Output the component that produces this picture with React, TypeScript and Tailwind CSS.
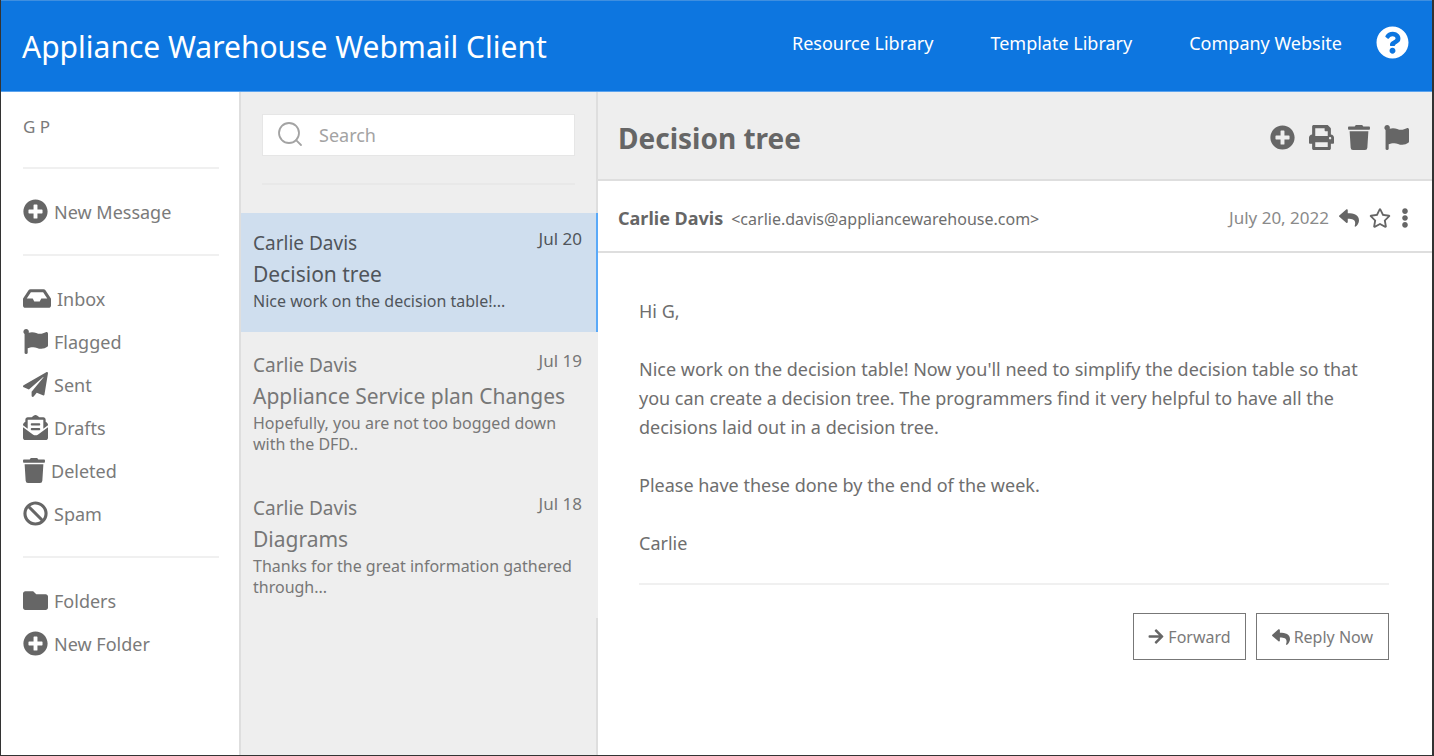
import type { ReactNode } from "react";
import type { IconType } from "react-icons";
import {
  FaArrowRight,
  FaBan,
  FaEllipsisV,
  FaEnvelopeOpenText,
  FaFlag,
  FaFolder,
  FaInbox,
  FaPaperPlane,
  FaPlusCircle,
  FaPrint,
  FaQuestionCircle,
  FaRegStar,
  FaReply,
  FaTrash,
} from "react-icons/fa";

type Message = {
  from: string;
  date: string;
  subject: string;
  preview: string;
  selected?: boolean;
};

const messages: Message[] = [
  {
    from: "Carlie Davis",
    date: "Jul 20",
    subject: "Decision tree",
    preview: "Nice work on the decision table!...",
    selected: true,
  },
  {
    from: "Carlie Davis",
    date: "Jul 19",
    subject: "Appliance Service plan Changes",
    preview: "Hopefully, you are not too bogged down with the DFD..",
  },
  {
    from: "Carlie Davis",
    date: "Jul 18",
    subject: "Diagrams",
    preview: "Thanks for the great information gathered through...",
  },
];

const topLinks = ["Resource Library", "Template Library", "Company Website"];

function NavItem({ icon: Icon, label, width = "w-[25px]" }: { icon: IconType; label: string; width?: string }) {
  return (
    <a href="#" className="flex h-[43px] items-center gap-1.5 text-[18px] leading-6">
      <Icon className={`h-[25px] shrink-0 text-[#666] ${width}`} />
      <span>{label}</span>
    </a>
  );
}

function NavDivider() {
  return (
    <div className="flex h-11 items-center">
      <hr className="w-full border-t-2 border-[#f0f0f0]" />
    </div>
  );
}

function Sidebar() {
  return (
    <nav aria-label="Mailboxes" className="w-[238px] shrink-0 bg-white pt-[15px] pr-5 pl-[22px] text-[#7a7a7a]">
      <p className="flex h-[39px] items-center text-[17px] leading-6">G P</p>
      <NavDivider />
      <NavItem icon={FaPlusCircle} label="New Message" />
      <NavDivider />
      <NavItem icon={FaInbox} label="Inbox" width="w-7" />
      <NavItem icon={FaFlag} label="Flagged" />
      <NavItem icon={FaPaperPlane} label="Sent" />
      <NavItem icon={FaEnvelopeOpenText} label="Drafts" />
      <NavItem icon={FaTrash} label="Deleted" width="w-[22px]" />
      <NavItem icon={FaBan} label="Spam" />
      <NavDivider />
      <NavItem icon={FaFolder} label="Folders" />
      <NavItem icon={FaPlusCircle} label="New Folder" />
    </nav>
  );
}

function SearchBox() {
  return (
    <div className="flex h-[42px] items-center border border-[#e6e6e6] bg-white pl-3.5">
      <svg viewBox="0 0 26 26" className="h-[26px] w-[26px] shrink-0" fill="none" stroke="#a3a3a3" strokeWidth="1.8">
        <circle cx="12" cy="11" r="10" />
        <path d="M19.1 18.2 L24 23" strokeLinecap="round" />
      </svg>
      <input
        type="search"
        aria-label="Search"
        placeholder="Search"
        className="w-full min-w-0 bg-transparent pl-4 text-[18px] leading-6 outline-none placeholder:text-[#a3a3a3]"
      />
    </div>
  );
}

function MessageRow({ message }: { message: Message }) {
  return (
    <li>
      <a
        href="#"
        className={
          message.selected
            ? "block border-r-2 border-[#5aa9f8] bg-[#cfdeee] pt-4 pr-3.5 pb-5 pl-3 text-[#50555b]"
            : "block border-r-2 border-[#eee] pt-[19px] pr-3.5 pb-5 pl-3 text-[#777]"
        }
      >
        <div className="flex items-start justify-between">
          <span className="pt-0.5 text-[19px] leading-6">{message.from}</span>
          <span className="text-[17px] leading-5">{message.date}</span>
        </div>
        <h2 className="pt-[3px] pb-px text-[21px] leading-8">{message.subject}</h2>
        <p className="text-[16px] leading-[21px]">{message.preview}</p>
      </a>
    </li>
  );
}

function MessageList() {
  return (
    <section aria-label="Messages" className="w-[359px] shrink-0 border-x-2 border-[#dedede] bg-[#eee]">
      <div className="px-[21px] pt-[22px] pb-7">
        <SearchBox />
        <hr className="mt-[27px] border-t-2 border-[#e8e8e8]" />
      </div>
      <ul className="-mr-0.5">
        {messages.map((message) => (
          <MessageRow key={message.date} message={message} />
        ))}
      </ul>
    </section>
  );
}

function IconButton({ label, children }: { label: string; children: ReactNode }) {
  return (
    <button type="button" aria-label={label} className="text-[#666]">
      {children}
    </button>
  );
}

function Reader() {
  return (
    <main className="min-w-0 flex-1 bg-white text-[#6e6e6e]">
      <header className="flex h-[89px] items-center justify-between border-b-2 border-[#dedede] bg-[#eee] pt-1 pr-[23px] pl-5">
        <h1 className="text-[28px] leading-9 font-bold text-[#666]">Decision tree</h1>
        <div className="flex items-center gap-3.5">
          <IconButton label="Add">
            <FaPlusCircle className="h-[25px] w-[25px]" />
          </IconButton>
          <IconButton label="Print">
            <FaPrint className="h-[25px] w-[25px]" />
          </IconButton>
          <IconButton label="Delete">
            <FaTrash className="h-[25px] w-[22px]" />
          </IconButton>
          <IconButton label="Flag">
            <FaFlag className="h-[25px] w-[25px]" />
          </IconButton>
        </div>
      </header>
      <div className="flex h-[72px] items-center justify-between border-b-2 border-[#dedede] pt-1 pr-[23px] pl-5">
        <p className="flex items-baseline gap-2">
          <b className="text-[18px] leading-6 text-[#666]">Carlie Davis</b>
          <span className="text-[16px] leading-6">&lt;carlie.davis@appliancewarehouse.com&gt;</span>
        </p>
        <div className="flex items-center gap-2.5">
          <time dateTime="2022-07-20" className="text-[17px] leading-6 text-[#8a8a8a]">
            July 20, 2022
          </time>
          <IconButton label="Reply">
            <FaReply className="h-5 w-5" />
          </IconButton>
          <IconButton label="Star">
            <FaRegStar className="h-5 w-[22px]" />
          </IconButton>
          <IconButton label="More">
            <FaEllipsisV className="h-5 w-2" />
          </IconButton>
        </div>
      </div>
      <article className="pt-11 pr-[43px] pl-[41px]">
        <div className="flex flex-col gap-[29px] text-[18px] leading-[29px]">
          <p>Hi G,</p>
          <p>
            Nice work on the decision table! Now you'll need to simplify the decision table so that you can create a
            decision tree. The programmers find it very helpful to have all the decisions laid out in a decision tree.
          </p>
          <p>Please have these done by the end of the week.</p>
          <p>Carlie</p>
        </div>
        <hr className="mt-[25px] border-t-2 border-[#f0f0f0]" />
        <div className="mt-7 flex justify-end gap-2.5 text-[16px] leading-6 text-[#7a7a7a]">
          <button type="button" className="flex h-[47px] items-center gap-1 border border-[#777] px-3.5">
            <FaArrowRight className="h-[17px] w-4 text-[#666]" />
            Forward
          </button>
          <button type="button" className="flex h-[47px] items-center gap-1 border border-[#777] px-[15px]">
            <FaReply className="h-[18px] w-[18px] text-[#666]" />
            Reply Now
          </button>
        </div>
      </article>
    </main>
  );
}

export default function App() {
  return (
    <div className="flex min-h-screen flex-col border-r-2 border-b border-l border-[#333] bg-white font-['Noto_Sans',sans-serif]">
      <header className="flex h-[92px] items-center justify-between border-y border-t-[#3f8fe0] border-b-[#5ba3ee] bg-[#0d76e0] pr-[23px] pl-[21px] text-white">
        <span className="pt-0.5 text-[30px] leading-10">Appliance Warehouse Webmail Client</span>
        <nav aria-label="Resources" className="flex items-center gap-[34px] pb-2">
          <div className="flex gap-[57px] pt-0.5 text-[18px] leading-6">
            {topLinks.map((link) => (
              <a key={link} href="#">
                {link}
              </a>
            ))}
          </div>
          <button type="button" aria-label="Help">
            <FaQuestionCircle className="h-[33px] w-[33px]" />
          </button>
        </nav>
      </header>
      <div className="flex flex-1">
        <Sidebar />
        <MessageList />
        <Reader />
      </div>
    </div>
  );
}
